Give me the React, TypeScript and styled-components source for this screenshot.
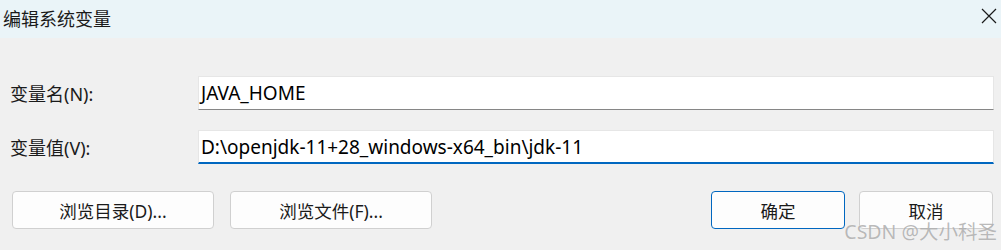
import React from "react";
import styled, { createGlobalStyle } from "styled-components";

const Global = createGlobalStyle`
  html, body { margin: 0; padding: 0; background: #f0f0f0; }
  body { font-family: "Noto Sans", "Noto Sans CJK SC", sans-serif; }
`;

const Window = styled.div`
  position: relative;
  width: 1001px;
  height: 250px;
  background: #f0f0f0;
  display: flex;
  flex-direction: column;
  overflow: hidden;
`;

const TitleBar = styled.div`
  height: 38px;
  background: #eaf4f8;
  display: flex;
  align-items: center;
  justify-content: space-between;
  padding: 0 4px 0 3px;
  box-sizing: border-box;
`;

const Title = styled.div`
  font-family: "Noto Sans CJK SC", sans-serif;
  font-size: 18px;
  color: #1a1a1a;
  line-height: 1;
  margin-top: -3px;
`;

const CloseButton = styled.div`
  width: 16px;
  height: 16px;
  display: flex;
  margin-top: -7px;
`;

const Form = styled.div`
  display: flex;
  flex-direction: column;
  gap: 20px;
  padding: 38px 7px 0 10px;
`;

const Row = styled.div`
  display: grid;
  grid-template-columns: 188px 1fr;
  align-items: center;
`;

const Label = styled.div`
  font-family: "Noto Sans", "Noto Sans CJK SC", sans-serif;
  font-size: 18px;
  color: #1a1a1a;
`;

const Field = styled.div<{ $focused?: boolean }>`
  height: 34px;
  box-sizing: border-box;
  background: #ffffff;
  border: 1px solid #e6e6e6;
  border-bottom: ${(p) => (p.$focused ? "2px solid #0067c0" : "1px solid #868686")};
  display: flex;
  align-items: center;
  padding: 0 0 0 2px;
  font-family: "Noto Sans", sans-serif;
  font-size: 19px;
  color: #000;
`;

const Buttons = styled.div`
  display: flex;
  justify-content: space-between;
  padding: 27px 8px 0 12px;
`;

const Group = styled.div<{ $gap: number }>`
  display: flex;
  gap: ${(p) => p.$gap}px;
`;

const Button = styled.div<{ $w: number; $primary?: boolean }>`
  width: ${(p) => p.$w}px;
  height: 38px;
  box-sizing: border-box;
  background: #fdfdfd;
  border: 1px solid ${(p) => (p.$primary ? "#0067c0" : "#d0d0d0")};
  border-radius: 4px;
  display: flex;
  align-items: center;
  justify-content: center;
  font-family: "Noto Sans", "Noto Sans CJK SC", sans-serif;
  font-size: 17.5px;
  color: #1a1a1a;
`;

const Watermark = styled.div`
  position: absolute;
  right: 4px;
  bottom: 9px;
  font-family: "Noto Sans", "Noto Sans CJK SC", sans-serif;
  font-size: 19.5px;
  color: rgba(140, 140, 140, 0.6);
  text-shadow: 0 0 1px rgba(255, 255, 255, 0.7);
  line-height: 1;
`;

export default function App() {
  return (
    <>
      <Global />
      <Window>
        <TitleBar>
          <Title>编辑系统变量</Title>
          <CloseButton>
            <svg width="16" height="16" viewBox="0 0 16 16">
              <path d="M1 1 L15 15 M15 1 L1 15" stroke="#1a1a1a" strokeWidth="1.2" fill="none" />
            </svg>
          </CloseButton>
        </TitleBar>
        <Form>
          <Row>
            <Label>变量名(N):</Label>
            <Field>JAVA_HOME</Field>
          </Row>
          <Row>
            <Label>变量值(V):</Label>
            <Field $focused>D:\openjdk-11+28_windows-x64_bin\jdk-11</Field>
          </Row>
        </Form>
        <Buttons>
          <Group $gap={16}>
            <Button $w={202}>浏览目录(D)...</Button>
            <Button $w={202}>浏览文件(F)...</Button>
          </Group>
          <Group $gap={14}>
            <Button $w={134} $primary>确定</Button>
            <Button $w={134}>取消</Button>
          </Group>
        </Buttons>
        <Watermark>CSDN @大小科圣</Watermark>
      </Window>
    </>
  );
}
